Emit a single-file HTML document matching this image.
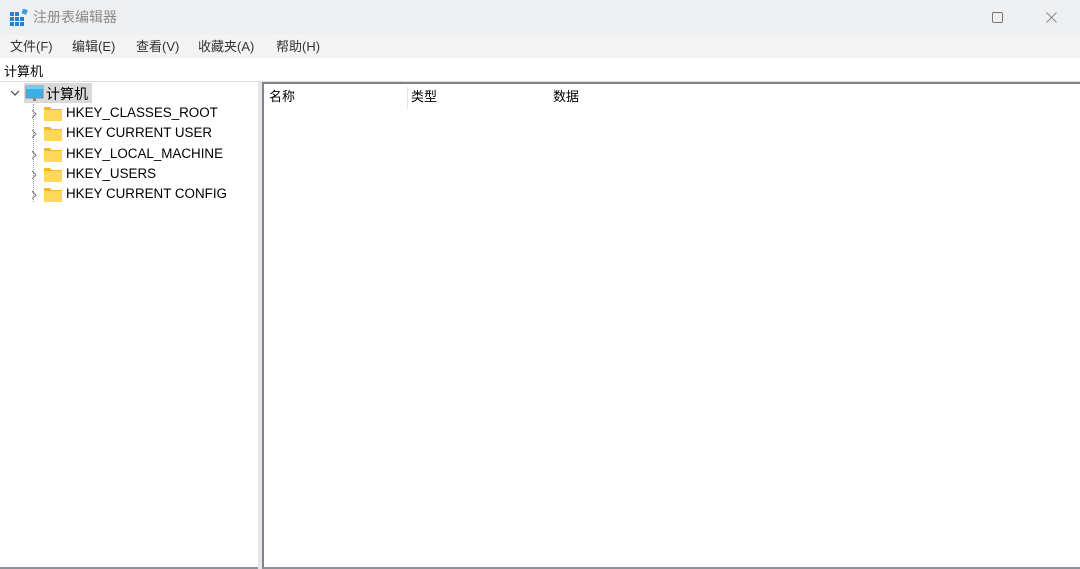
<!DOCTYPE html>
<html><head><meta charset="utf-8"><style>
*{margin:0;padding:0;box-sizing:border-box}
body{width:1080px;height:569px;overflow:hidden;background:#fff;font-family:"Liberation Sans","Noto Sans CJK SC",sans-serif;position:relative;color:#000}
.title{position:absolute;left:0;top:0;width:1080px;height:35px;background:#eeeff1}
.title .t{position:absolute;left:33px;top:7px;font-size:14px;color:#8a8a8a}
.menu{position:absolute;left:0;top:35px;width:1080px;height:23px;background:#f3f3f3;font-size:13px;color:#333}
.menu span{position:absolute;top:1px}
.addr{position:absolute;left:0;top:58px;width:1080px;height:24px;background:#fff;border-bottom:1px solid #dcdcdc;font-size:13px}
.addr span{position:absolute;left:4px;top:3px}
.left{position:absolute;left:0;top:82px;width:258px;height:487px;background:#fff;border-bottom:2px solid #8c8f96}
.split{position:absolute;left:258px;top:82px;width:4px;height:487px;background:#e6e6e8}
.right{position:absolute;left:262px;top:82px;width:818px;height:487px;border-left:2px solid #80848a;border-top:2px solid #80848a;border-bottom:2px solid #8c8f96;background:#fff}
.item{position:absolute;font-size:13.4px;white-space:nowrap}
.hdr{position:absolute;top:2px;font-size:13px}
</style></head><body>
<div class="title">
<svg style="position:absolute;left:10px;top:9px" width="18" height="17" viewBox="0 0 18 17"><g fill="#2b7fd0"><rect x="0" y="3" width="4" height="4"/><rect x="5" y="3" width="4" height="4"/><rect x="0" y="8" width="4" height="4"/><rect x="5" y="8" width="4" height="4"/><rect x="10" y="8" width="4" height="4"/><rect x="0" y="13" width="4" height="4"/><rect x="5" y="13" width="4" height="4"/><rect x="10" y="13" width="4" height="4"/></g><rect x="12" y="0" width="5" height="5" fill="#3aa0e8" transform="rotate(20 14 3)"/></svg>
<span class="t">注册表编辑器</span>
<svg style="position:absolute;left:992px;top:12px" width="11" height="11"><rect x="0.5" y="0.5" width="10" height="10" rx="1.5" fill="none" stroke="#777"/></svg>
<svg style="position:absolute;left:1046px;top:12px" width="11" height="11"><path d="M0.5 0.5L10.5 10.5M10.5 0.5L0.5 10.5" stroke="#888" stroke-width="1"/></svg>
</div>
<div class="menu"><span style="left:10px">文件(F)</span><span style="left:72px">编辑(E)</span><span style="left:136px">查看(V)</span><span style="left:198px">收藏夹(A)</span><span style="left:276px">帮助(H)</span></div>
<div class="addr"><span>计算机</span></div>
<div class="left">
<svg style="position:absolute;left:10px;top:7px" width="10" height="8"><path d="M1 2L5 6L9 2" fill="none" stroke="#444" stroke-width="1.2"/></svg>
<div style="position:absolute;left:24px;top:1px;width:68px;height:20px;background:#d9d9d9"></div>
<svg style="position:absolute;left:25px;top:3px" width="19" height="18"><rect x="1" y="1" width="17" height="12" fill="#3ab0e6" stroke="#7a8a96"/><rect x="1" y="1" width="17" height="3" fill="#6fd0f5"/><rect x="8" y="13" width="3" height="3" fill="#888"/></svg>
<span class="item" style="left:46px;top:2px;font-size:14px">计算机</span>
<div style="position:absolute;left:33px;top:22px;height:98px;border-left:1px dotted #999"></div>
<div id="keys"></div>
</div>
<div class="split"></div>
<div class="right">
<span class="hdr" style="left:5px">名称</span>
<div style="position:absolute;left:143px;top:3px;width:1px;height:22px;background:#e3e3e3"></div>
<span class="hdr" style="left:147px">类型</span>
<span class="hdr" style="left:289px">数据</span>
</div>
<script>
var k=["HKEY_CLASSES_ROOT","HKEY CURRENT USER","HKEY_LOCAL_MACHINE","HKEY_USERS","HKEY CURRENT CONFIG"],h="";
k.forEach(function(n,i){var y=22+i*20.3;
h+='<svg style="position:absolute;left:30px;top:'+(y+5)+'px" width="8" height="10"><path d="M2 1L6 5L2 9" fill="none" stroke="#777" stroke-width="1"/></svg>';
h+='<svg style="position:absolute;left:44px;top:'+(y+2)+'px" width="18" height="15"><path d="M0 1h6l2 2h10v12H0z" fill="#f2b825"/><rect x="0" y="4" width="18" height="11" fill="#ffd75c"/></svg>';
h+='<span class="item" style="left:66px;top:'+(y+1)+'px">'+n+'</span>';});
document.getElementById("keys").innerHTML=h;
</script>
</body></html>
